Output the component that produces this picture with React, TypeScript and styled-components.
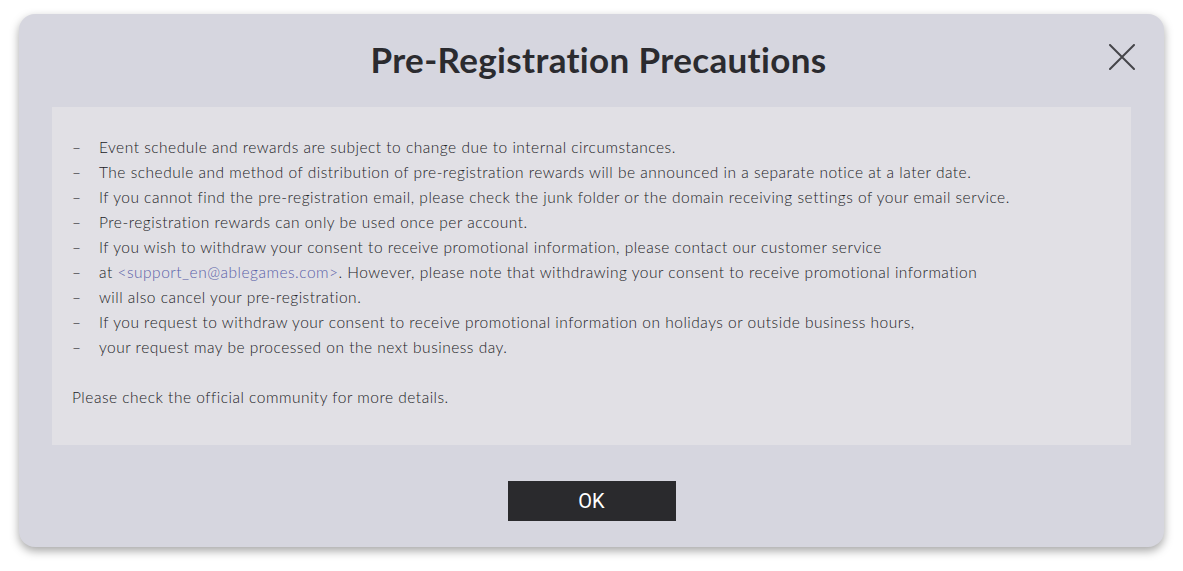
import React from 'react';
import styled, { createGlobalStyle } from 'styled-components';

const GlobalStyle = createGlobalStyle`
  html, body {
    margin: 0;
    padding: 0;
    background: #ffffff;
  }
  * {
    box-sizing: border-box;
  }
`;

const Page = styled.div`
  width: 1183px;
  height: 571px;
  padding: 14px 19px 24px;
`;

const Modal = styled.div`
  position: relative;
  height: 533px;
  background: #d6d6df;
  border-radius: 16px;
  box-shadow: 0 4px 10px rgba(0, 0, 0, 0.35);
  padding: 0 33px;
  display: flex;
  flex-direction: column;
  align-items: stretch;
`;

const Title = styled.h1`
  margin: 0;
  height: 93px;
  display: flex;
  align-items: center;
  justify-content: center;
  padding: 0 0 4px 14px;
  font-family: Lato, 'Noto Sans', sans-serif;
  font-weight: 700;
  font-size: 35px;
  color: #2b2b2f;
  letter-spacing: 0.35px;
`;

const CloseButton = styled.button`
  position: absolute;
  top: 29px;
  right: 28px;
  width: 28px;
  height: 28px;
  padding: 0;
  border: none;
  background: transparent;
  cursor: pointer;
  display: flex;
  align-items: center;
  justify-content: center;
`;

const Body = styled.div`
  background: #e1e0e5;
  height: 338px;
  padding: 28px 20px 0;
  font-family: Lato, 'Noto Sans', sans-serif;
  font-weight: 300;
  font-size: 15.5px;
  letter-spacing: 0.5px;
  line-height: 25px;
  color: #222226;
`;

const List = styled.ul`
  list-style: none;
  margin: 0 0 25px;
  padding: 0;
`;

const Item = styled.li`
  display: flex;
`;

const Dash = styled.span`
  width: 27px;
  flex-shrink: 0;
`;

const Mail = styled.a`
  color: #5a60a8;
  text-decoration: none;
`;

const Note = styled.p`
  margin: 0;
`;

const Footer = styled.div`
  display: flex;
  justify-content: center;
  padding-top: 36px;
`;

const OkButton = styled.button`
  width: 168px;
  height: 40px;
  border: none;
  background: #2a2a2d;
  color: #ffffff;
  font-family: Roboto, 'Liberation Sans', sans-serif;
  font-size: 20px;
  cursor: pointer;
`;

const items: React.ReactNode[] = [
  'Event schedule and rewards are subject to change due to internal circumstances.',
  'The schedule and method of distribution of pre-registration rewards will be announced in a separate notice at a later date.',
  'If you cannot find the pre-registration email, please check the junk folder or the domain receiving settings of your email service.',
  'Pre-registration rewards can only be used once per account.',
  'If you wish to withdraw your consent to receive promotional information, please contact our customer service',
  <>
    at <Mail href="#">&lt;support_en@ablegames.com&gt;</Mail>. However, please note that withdrawing your consent to
    receive promotional information
  </>,
  'will also cancel your pre-registration.',
  'If you request to withdraw your consent to receive promotional information on holidays or outside business hours,',
  'your request may be processed on the next business day.',
];

const App: React.FC = () => {
  return (
    <Page>
      <GlobalStyle />
      <Modal>
        <Title>Pre-Registration Precautions</Title>
        <CloseButton aria-label="Close">
          <svg width="26" height="26" viewBox="0 0 26 26">
            <path d="M1 1 L25 25 M25 1 L1 25" stroke="#454549" strokeWidth="2" strokeLinecap="round" />
          </svg>
        </CloseButton>
        <Body>
          <List>
            {items.map((text, i) => (
              <Item key={i}>
                <Dash>–</Dash>
                <span>{text}</span>
              </Item>
            ))}
          </List>
          <Note>Please check the official community for more details.</Note>
        </Body>
        <Footer>
          <OkButton>OK</OkButton>
        </Footer>
      </Modal>
    </Page>
  );
};

export default App;
